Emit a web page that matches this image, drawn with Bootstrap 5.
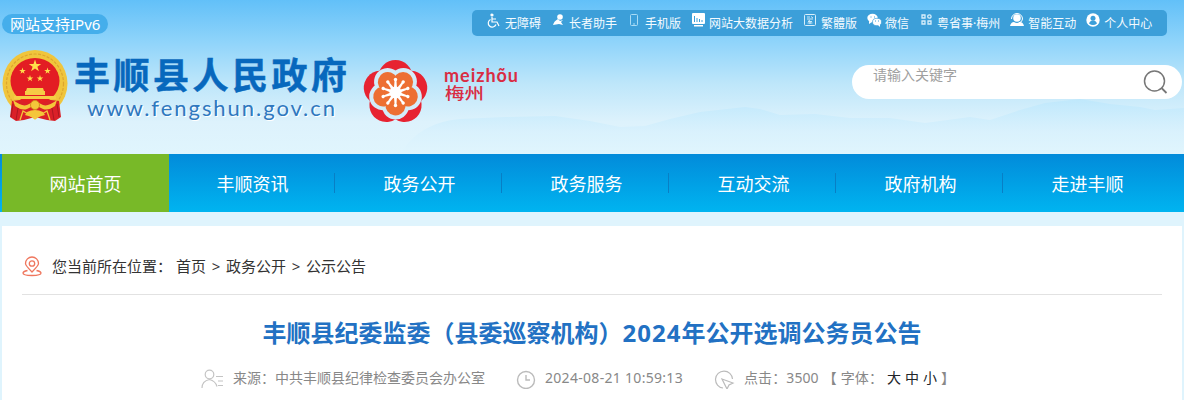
<!DOCTYPE html>
<html lang="zh-CN">
  <head>
    <meta charset="UTF-8" />
    <meta name="viewport" content="width=device-width, initial-scale=1" />
    <title>丰顺县人民政府</title>
    <!-- Bootstrap CSS -->
    <link
      href="https://cdn.jsdelivr.net/npm/bootstrap@5.3.0/dist/css/bootstrap.min.css"
      rel="stylesheet"
    />
    <style>
      body {
        background: #dff4fd;
        color: #333;
        font-family: 'Noto Sans', 'Noto Sans CJK SC', sans-serif;
        font-size: 14px;
        height: 400px;
        overflow: hidden;
      }
      a {
        color: inherit;
        text-decoration: none;
      }
      svg {
        display: block;
        flex-shrink: 0;
      }
      /* Header */
      .site-head {
        height: 154px;
        background: linear-gradient(#62c0f8 0, #8dd3fa 40px, #bde6fa 83px, #ddf2fc 122px, #e0f5fd 154px);
      }
      .hills {
        left: 400px;
        top: 90px;
      }
      .site-url {
        text-shadow: 1px 1px 0 #fff;
      }
      .ipv6 {
        margin: 14px 0 0 2px;
        width: 106px;
        height: 20px;
        border-radius: 10px;
        background: #45aeeb;
        color: #fff;
        font-size: 15px;
        line-height: 21px;
        padding-left: 8px;
        white-space: nowrap;
      }
      .toolbar {
        margin: 10px 17px 0 0;
        width: 695px;
        height: 26px;
        padding-left: 5px;
        border-radius: 5px;
        background: #3c9fd9;
        color: #f4fbff;
        font-size: 12px;
        line-height: 27px;
        white-space: nowrap;
      }
      .toolbar a {
        padding-left: 10px;
        gap: 2px;
      }
      .toolbar svg {
        margin-top: 3px;
      }
      .head-top {
        height: 36px;
      }
      .search-box {
        width: 330px;
        height: 34px;
        margin: 29px 2px 0 0;
        padding: 0 14px 0 21px;
        border-radius: 17px;
        background: #fff;
      }
      .search-box input {
        width: 240px;
        height: 19px;
        padding: 0;
        border: 0;
        outline: 0;
        font-size: 14px;
      }
      .search-box input::placeholder {
        color: #a0a0a0;
      }
      /* Main navigation */
      .main-nav {
        height: 58px;
        padding-left: 2px;
        background: linear-gradient(#028bda, #00b4f0);
      }
      .main-nav a {
        width: 167px;
        height: 58px;
        color: #fff;
        font-size: 18px;
        line-height: 60px;
        text-align: center;
        background: linear-gradient(#087fc5, #087fc5) 165px 19px / 1px 20px no-repeat;
      }
      .main-nav a.active {
        background: #78b928;
      }
      .main-nav a:last-child {
        background: none;
      }
      /* Article */
      .article {
        margin: 14px 2px 0;
        padding: 0 20px;
        height: 174px;
        background: #fff;
      }
      .crumbs {
        height: 69px;
        padding-top: 13px;
        border-bottom: 1px solid #e2e2e2;
        font-size: 15px;
        white-space: pre;
      }
      .crumb-path {
        margin-left: 4px;
        word-spacing: 1.8px;
      }
      .article-title {
        margin: 20px 0 0;
        color: #2271c3;
        font-size: 24px;
        font-weight: 700;
        line-height: 36px;
        text-align: center;
      }
      .title-year {
        letter-spacing: 1px;
      }
      .meta {
        margin: 16px 0 0 179px;
        color: #888;
        line-height: 22px;
        white-space: pre;
      }
      .meta-date {
        letter-spacing: 0.3px;
      }
      .meta-hits {
        letter-spacing: 0.1px;
        word-spacing: 0.2px;
      }
    </style>
  </head>
  <body>
    <header class="site-head position-relative">
      <svg class="hills position-absolute" width="784" height="64" viewBox="0 0 784 64">
        <defs>
          <linearGradient id="hill" x1="0" y1="0" x2="0" y2="1">
            <stop offset="0" stop-color="#bce7fc" />
            <stop offset=".6" stop-color="#d8f1fd" />
            <stop offset="1" stop-color="#e0f5fd" />
          </linearGradient>
        </defs>
        <path d="M0 64Q20 32 60 29L105 27 155 26 190 31 220 37 245 36 270 29 300 22 345 17 360 19 380 25 415 24 450 28 490 28 525 33 570 27 590 30 620 20 645 13 680 9 710 14 740 17 755 20 784 18V64z" fill="url(#hill)" opacity=".8" />
      </svg>

      <div class="head-top d-flex justify-content-between align-items-start position-relative">
        <div class="ipv6">网站支持IPv6</div>
        <nav class="toolbar d-flex">
          <a class="d-flex" href="#">
            <svg width="16" height="16" fill="none" stroke="#fff" stroke-width="1.2">
              <circle cx="5" cy="2" r="1" fill="#fff" />
              <path d="M5 4v5h5l2 4M5 6h4M3.5 6.5a4 4 0 1 0 5.5 5" />
            </svg>
            <span>无障碍</span></a>
          <a class="d-flex" href="#">
            <svg width="16" height="16" fill="#fff">
              <circle cx="9" cy="4" r="2.800" />
              <path d="M2 12q1-4 5-6l2 2 3-1-2 2 2 3-4-1z" />
            </svg>
            <span>长者助手</span></a>
          <a class="d-flex" href="#">
            <svg width="16" height="16" fill="none" stroke="#a9dcf6">
              <rect x="3.500" y="1.500" width="7" height="11" rx="1" />
              <path d="M6 11h2" />
            </svg>
            <span>手机版</span></a>
          <a class="d-flex" href="#">
            <svg width="16" height="16">
              <rect x="1" y="0" width="13" height="11" rx="1" fill="#fff" />
              <path d="M3 12h9v1.500H3z" fill="#fff" />
              <path d="M3.500 3v6M6 5v4M8.500 6v3M11 7v2" stroke="#3c9fd9" />
            </svg>
            <span>网站大数据分析</span></a>
          <a class="d-flex" href="#">
            <svg width="16" height="16" fill="none" stroke="#d8effb">
              <rect x="1.500" y="1.500" width="11" height="11" rx="1" />
              <path d="M4 4h3M4 6h6M8 3.500 10 5M7 7 5 8.500h4M4.500 10h5M7 8v3" stroke-width=".9" />
            </svg>
            <span>繁體版</span></a>
          <a class="d-flex" href="#">
            <svg width="16" height="16">
              <ellipse cx="5.500" cy="5" rx="5.200" ry="4.200" fill="#fff" />
              <path d="m2 8v3l3-2z" fill="#fff" />
              <ellipse cx="10" cy="9" rx="4.500" ry="3.700" fill="#fff" stroke="#3c9fd9" stroke-width=".7" />
              <path d="m11 12 2 2v-3z" fill="#fff" />
              <path d="M3.500 4h1M7 4h1M8 8h1M11 8h1" stroke="#3c9fd9" />
            </svg>
            <span>微信</span></a>
          <a class="d-flex" href="#">
            <svg width="16" height="16" fill="none" stroke="#d8effb" stroke-width="1.300">
              <path d="M3 2h3v3H3zM3 8h3v3H3zM9 8h3v3H9z" />
              <circle cx="10.400" cy="3.500" r="1.700" />
            </svg>
            <span>粤省事·梅州</span></a>
          <a class="d-flex" href="#">
            <svg width="16" height="16" fill="#fff">
              <circle cx="7" cy="5" r="3.800" />
              <path d="M1.500 6a5.500 5.500 0 0 1 11 0q0 3-4 4" fill="none" stroke="#fff" />
              <path d="M0 13q1-4 4-4 3 2 6 0 3 0 4 4z" />
            </svg>
            <span>智能互动</span></a>
          <a class="d-flex" href="#">
            <svg width="16" height="16">
              <circle cx="7" cy="7" r="6.700" fill="#fff" />
              <circle cx="7" cy="5.200" r="2.500" fill="#3c9fd9" />
              <path d="M3 10.500q1-3 4-3t4 3q-4 3-8 0z" fill="#3c9fd9" />
            </svg>
            <span>个人中心</span></a>
        </nav>
      </div>

      <div class="d-flex justify-content-between align-items-start position-relative">
        <!-- Emblem, site name and city logo -->
        <svg width="540" height="100" viewBox="0 36 540 100">
          <!-- emblem -->
          <g>
            <ellipse cx="35" cy="83.500" rx="32.500" ry="33.500" fill="#f0c53c" />
            <ellipse cx="35" cy="83.500" rx="28.500" ry="29.500" fill="none" stroke="#dda52e" stroke-width="1.200" stroke-dasharray="3 1.500" />
            <path d="M12 101 10 117l6 4 8-1 11-3 12 3 8 1 6-4-2-16-24-3z" fill="#da2028" />
            <ellipse cx="35" cy="81" rx="24.500" ry="23" fill="#e31d23" />
            <path d="m35 59.500 1.500 4.500h4.700l-3.800 2.800 1.500 4.500-3.900-2.800-3.900 2.800 1.500-4.500-3.800-2.800h4.700z" fill="#ffde4a" />
            <g fill="#ffde4a">
              <path id="star-s" d="m22.500 67.500.8 2.400h2.500l-2 1.500.8 2.400-2.100-1.500-2 1.500.7-2.400-2-1.500h2.500z" />
              <use href="#star-s" x="25" />
              <use href="#star-s" x="7.500" y="7.500" />
              <use href="#star-s" x="17.500" y="7.500" />
            </g>
            <path d="M27 88h16l1 3H26zM25 91h20v4H25zM14 96h42v3H14z" fill="#f6cc45" />
            <path d="M13 100q9 7 14 5l8-4 8 4q5 2 14-5l-2 6q-7 5-12 3l-8-4-8 4q-5 2-12-3z" fill="#f4c63a" />
            <circle cx="35" cy="105" r="4.500" fill="#f4c63a" stroke="#d78b20" />
            <path d="M27 112q8-4 16 0l2 3-10 3-10-3z" fill="#f4c63a" />
            <path d="M13 104 11 117M18 108l-2 12M52 108l2 12M57 104l2 13" stroke="#ac1820" fill="none" />
            <path d="M20 120l3-9 5 3 7 5 7-5 5-3 3 9" fill="none" stroke="#f4c63a" stroke-width="1.300" />
          </g>
          <!-- site name -->
          <text x="74" y="89" font-family="'Noto Sans CJK SC', sans-serif" font-size="36" font-weight="700" letter-spacing="3.500" fill="#0768bd" stroke="#0768bd" stroke-width=".5">丰顺县人民政府</text>
          <text class="site-url" x="87" y="116" font-family="Lato, sans-serif" font-size="22" textLength="248" fill="#2f78bf">www.fengshun.gov.cn</text>
          <!-- plum blossom -->
          <g transform="translate(395.500 92.500)">
            <g fill="#e72331">
              <circle id="outer" r="17" cy="-15.500" />
              <use href="#outer" transform="rotate(72)" />
              <use href="#outer" transform="rotate(144)" />
              <use href="#outer" transform="rotate(216)" />
              <use href="#outer" transform="rotate(288)" />
            </g>
            <g fill="#d3ecf9">
              <circle r="19" />
              <circle id="rim" r="13.500" cx="7.900" cy="-10.900" />
              <use href="#rim" transform="rotate(72)" />
              <use href="#rim" transform="rotate(144)" />
              <use href="#rim" transform="rotate(216)" />
              <use href="#rim" transform="rotate(288)" />
            </g>
            <g fill="#ed6f33">
              <circle r="14" />
              <circle id="petal" r="10" cx="7.600" cy="-10.500" />
              <use href="#petal" transform="rotate(72)" />
              <use href="#petal" transform="rotate(144)" />
              <use href="#petal" transform="rotate(216)" />
              <use href="#petal" transform="rotate(288)" />
            </g>
            <g fill="#fff">
              <circle r="6" />
              <g id="stamen">
                <path d="M-1.800 0-.9-13H.9L1.800 0z" />
                <circle cy="-13" r="1.700" />
              </g>
              <use href="#stamen" transform="rotate(36)" />
              <use href="#stamen" transform="rotate(72)" />
              <use href="#stamen" transform="rotate(108)" />
              <use href="#stamen" transform="rotate(144)" />
              <use href="#stamen" transform="rotate(180)" />
              <use href="#stamen" transform="rotate(216)" />
              <use href="#stamen" transform="rotate(252)" />
              <use href="#stamen" transform="rotate(288)" />
              <use href="#stamen" transform="rotate(324)" />
            </g>
          </g>
          <text x="444" y="82" font-family="Lato, sans-serif" font-size="18" font-weight="700" textLength="74" fill="#d92c43">meizhõu</text>
          <text x="445" y="98.500" font-family="'Noto Sans CJK SC', sans-serif" font-size="16" font-weight="500" textLength="39" lengthAdjust="spacingAndGlyphs" fill="#d92c43">梅州</text>
        </svg>
        <form class="search-box d-flex justify-content-between">
          <input type="text" placeholder="请输入关键字" />
          <svg width="26" height="34" fill="none" stroke="#777" stroke-width="1.500">
            <circle cx="12.500" cy="16" r="10" />
            <path d="m19.500 23 5 5" stroke-width="1.800" />
          </svg>
        </form>
      </div>
    </header>

    <nav class="main-nav d-flex">
      <a class="active" href="#">网站首页</a>
      <a href="#">丰顺资讯</a>
      <a href="#">政务公开</a>
      <a href="#">政务服务</a>
      <a href="#">互动交流</a>
      <a href="#">政府机构</a>
      <a href="#">走进丰顺</a>
    </nav>

    <main class="article">
      <div class="crumbs d-flex align-items-center">
        <svg class="me-2" width="22" height="22" fill="none" stroke="#ef765d" stroke-width="1.300">
          <path d="M10 16Q3.500 9.500 3.500 7.500a6.500 6.500 0 0 1 13 0Q16.500 9.500 10 16z" />
          <circle cx="10" cy="7.500" r="2.700" />
          <path d="M5.500 14.500Q1 15.500 1 17q0 2.500 9 2.500t9-2.500q0-1.500-4.500-2.500" />
        </svg>
        <span>您当前所在位置：</span>
        <span class="crumb-path"><a href="#">首页</a> &gt; <a href="#">政务公开</a> &gt; <a href="#">公示公告</a></span>
      </div>
      <h1 class="article-title">丰顺县纪委监委（县委巡察机构）<span class="title-year">2024</span>年公开选调公务员公告</h1>
      <div class="meta d-flex">
        <svg width="32" height="22" fill="none" stroke="#c4c4c4" stroke-width="1.200">
          <circle cx="8.500" cy="7.500" r="4.300" />
          <path d="M1 21q0-7 7.500-8.500 6 1.500 7.500 7M15 9.500h7M17 14h5M17 18.500h5" />
        </svg>
        <span>来源：中共丰顺县纪律检查委员会办公室</span>
        <svg class="ms-4" width="36" height="22" fill="none" stroke="#bbb" stroke-width="1.400">
          <circle cx="17" cy="13" r="8.500" />
          <path d="M17 8v5h4" />
        </svg>
        <span class="meta-date">2024-08-21 10:59:13</span>
        <svg class="ms-4" width="37" height="22" fill="none" stroke="#bbb" stroke-width="1.200">
          <path d="M16 21A8.500 8.500 0 1 1 25.500 12M15 12l11 4-4 2-2 4z" />
        </svg>
        <span class="meta-hits">点击：3500 【 字体： <a class="text-dark" href="#">大</a> <a class="text-dark" href="#">中</a> <a class="text-dark" href="#">小</a> 】</span>
      </div>
    </main>

    <!-- Bootstrap JS Bundle -->
    <script src="https://cdn.jsdelivr.net/npm/bootstrap@5.3.0/dist/js/bootstrap.bundle.min.js"></script>
  </body>
</html>
